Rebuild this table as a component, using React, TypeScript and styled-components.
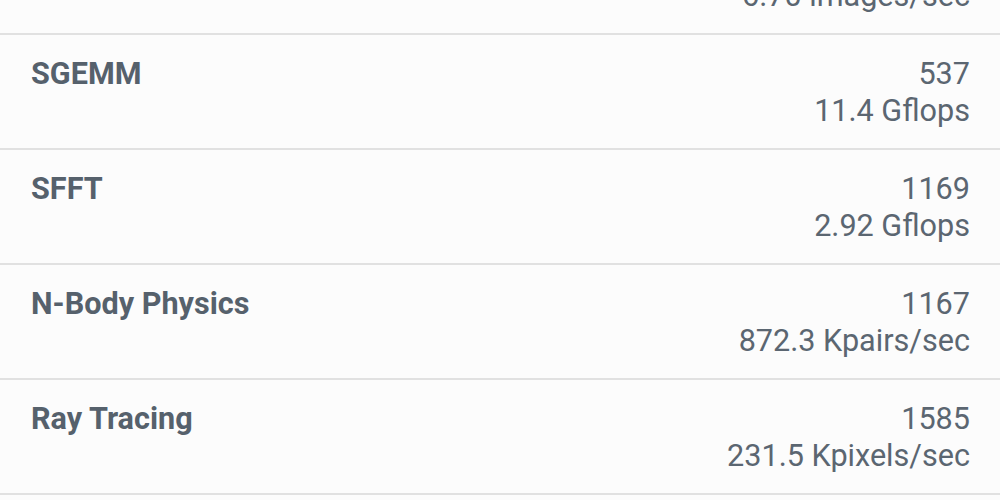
import React from "react";
import styled, { createGlobalStyle } from "styled-components";

type Result = {
  name: string;
  score: string;
  rate: string;
};

const results: Result[] = [
  { name: "Camera", score: "2286", rate: "6.70 images/sec" },
  { name: "SGEMM", score: "537", rate: "11.4 Gflops" },
  { name: "SFFT", score: "1169", rate: "2.92 Gflops" },
  { name: "N-Body Physics", score: "1167", rate: "872.3 Kpairs/sec" },
  { name: "Ray Tracing", score: "1585", rate: "231.5 Kpixels/sec" },
  { name: "Rigid Body Physics", score: "1708", rate: "5042.1 FPS" },
];

const GlobalStyle = createGlobalStyle`
  html, body {
    margin: 0;
    padding: 0;
    background: #fcfcfc;
    overflow: hidden;
  }
  body {
    font-family: Roboto, "Noto Sans", sans-serif;
  }
`;

function App() {
  return (
    <>
      <GlobalStyle />
      <Screen>
        <List>
          {results.map((item) => (
            <Row key={item.name}>
              <Name>{item.name}</Name>
              <Values>
                <Value>{item.score}</Value>
                <Value>{item.rate}</Value>
              </Values>
            </Row>
          ))}
        </List>
      </Screen>
    </>
  );
}

export default App;

// the list is scrolled: the first row only shows its last line
const Screen = styled.div`
  width: 1000px;
  height: 500px;
  overflow: hidden;
  background: #fcfcfc;
`;

const List = styled.div`
  display: flex;
  flex-direction: column;
  margin-top: -80px;
`;

const Row = styled.div`
  height: 113px;
  box-sizing: content-box;
  display: flex;
  flex-direction: row;
  justify-content: space-between;
  align-items: flex-start;
  padding: 0 30px 0 31px;
  border-bottom: 2px solid #e1e1e1;
`;

const Name = styled.div`
  margin-top: 20px;
  font-size: 30.6px;
  line-height: 37px;
  font-weight: 700;
  color: #56616c;
`;

const Values = styled.div`
  margin-top: 20px;
  display: flex;
  flex-direction: column;
  align-items: flex-end;
`;

const Value = styled.div`
  font-size: 30.6px;
  line-height: 37px;
  font-weight: 400;
  color: #5b6671;
`;
